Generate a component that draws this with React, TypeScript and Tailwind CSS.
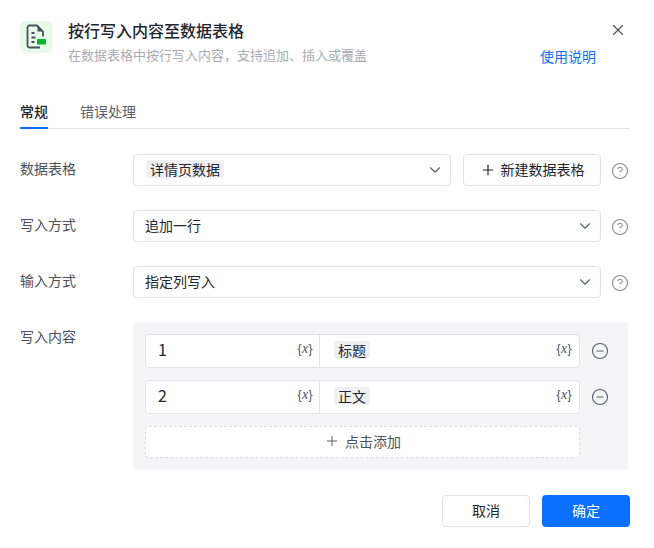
import React from 'react';
import { ChevronDown, CircleHelp, CircleMinus, Plus, X } from 'lucide-react';

const FONT = 'font-["Noto_Sans_CJK_SC","Liberation_Sans",sans-serif]';

const FieldLabel = ({ text }: { text: string }) => (
    <div className="w-[113px] shrink-0 text-[14px] leading-[28px] text-[#4b5060]">{text}</div>
);

const Help = () => (
    <div className="w-[29px] h-8 shrink-0 pr-[1px] flex items-center justify-end pt-[2px]">
        <CircleHelp size={18} strokeWidth={1.4} className="text-[#85878f]" />
    </div>
);

const SelectBox = ({ value, tag, width }: { value: string; tag?: boolean; width: string }) => (
    <div className={`${width} shrink-0 h-8 pl-3 pr-[6px] flex items-center justify-between bg-white border border-[#e2e3ea] rounded-[4px]`}>
        <span className={`text-[14px] leading-[18px] -mt-[2px] text-[#23262f] ${tag ? 'bg-[#eef0f4] rounded-[3px] px-1' : '-ml-[1px]'}`}>{value}</span>
        <ChevronDown size={18} strokeWidth={1.5} className="text-[#5c5f6b]" />
    </div>
);

const VarMark = () => (
    <span className='font-["Liberation_Sans",sans-serif] text-[12px] leading-none tracking-[0.4px] text-[#4b5060] pb-[4px]'>
        {'{'}<i className='font-["Liberation_Serif",serif] text-[14px]'>x</i>{'}'}
    </span>
);

const MappingRow = ({ index, name }: { index: string; name: string }) => (
    <div className="flex items-center">
        <div className="w-[435px] h-[34px] flex bg-white border border-[#e2e3ea] rounded-[4px]">
            <div className="w-[174px] pl-3 pr-[6px] flex items-center justify-between border-r border-[#e2e3ea]">
                <span className="text-[16px] text-[#23262f] pb-[5px]">{index}</span>
                <VarMark />
            </div>
            <div className="flex-1 pl-[14px] pr-[7px] flex items-center justify-between">
                <span className="text-[14px] leading-[18px] -mt-[2px] px-1 bg-[#eef0f4] rounded-[3px] text-[#23262f]">{name}</span>
                <VarMark />
            </div>
        </div>
        <CircleMinus size={18} strokeWidth={1.5} className="ml-[11px] text-[#5c5f6b]" />
    </div>
);

export default function App() {
    return (
        <div className={`${FONT} w-[654px] h-[548px] bg-white pl-5 pr-6 pt-[21px] overflow-hidden`}>
            {/* Header */}
            <div className="flex h-[53px]">
                <div className="w-8 h-8 rounded-[5px] bg-[#e8fbe9] flex items-center justify-center shrink-0">
                    <svg width="24" height="26" viewBox="0 0 24 26" fill="none">
                        <path d="M16 23.5H5.5a2 2 0 0 1-2-2V3.5a2 2 0 0 1 2-2H13l6 6v5" stroke="#4b5060" strokeWidth="1.8" />
                        <path d="M13.5 2v5.5H19Z" fill="#4b5060" />
                        <path d="M7.5 9h3M7.5 13.5h4M7.5 18h3" stroke="#4b5060" strokeWidth="1.8" />
                        <rect x="13" y="15" width="9" height="5.5" rx="0.5" fill="#0bb52b" />
                    </svg>
                </div>
                <div className="ml-4 flex-1 -mt-[1px]">
                    <div className="text-[16px] leading-[20px] font-medium text-[#23262f]">按行写入内容至数据表格</div>
                    <div className="mt-[5px] flex items-start justify-between">
                        <span className="text-[13px] leading-[20px] text-[#a9abb3]">在数据表格中按行写入内容，支持追加、插入或覆盖</span>
                        <span className="mt-[1px] mr-[13px] text-[14px] leading-[20px] text-[#0b6fff]">使用说明</span>
                    </div>
                </div>
                <X size={18} strokeWidth={1.5} className="mr-[3px] text-[#4b5060]" />
            </div>

            {/* Tabs */}
            <div className="mt-[27px] h-7 flex gap-8 border-b border-[#e2e3ea] w-[610px]">
                <div className="h-7 border-b-2 border-[#0b6fff] text-[14px] leading-[20px] font-medium text-[#23262f]">常规</div>
                <div className="text-[14px] leading-[20px] text-[#5c5f6b]">错误处理</div>
            </div>

            {/* Form */}
            <div className="mt-[25px] flex">
                <FieldLabel text="数据表格" />
                <SelectBox value="详情页数据" tag width="w-[318px]" />
                <div className="ml-3 w-[138px] shrink-0 h-8 pb-[1px] flex items-center justify-center gap-[5px] border border-[#e2e3ea] rounded-[4px] text-[14px] text-[#23262f]">
                    <Plus size={16} strokeWidth={1.8} />
                    新建数据表格
                </div>
                <Help />
            </div>
            <div className="mt-6 flex">
                <FieldLabel text="写入方式" />
                <SelectBox value="追加一行" width="w-[468px]" />
                <Help />
            </div>
            <div className="mt-6 flex">
                <FieldLabel text="输入方式" />
                <SelectBox value="指定列写入" width="w-[468px]" />
                <Help />
            </div>
            <div className="mt-6 flex">
                <FieldLabel text="写入内容" />
                <div className="w-[495px] h-[148px] bg-[#f5f5f8] rounded-[4px] px-3 pt-3">
                    <div className="flex flex-col gap-3">
                        <MappingRow index="1" name="标题" />
                        <MappingRow index="2" name="正文" />
                    </div>
                    <div className="mt-3 w-[435px] h-8 pb-[2px] flex items-center justify-center gap-[5px] bg-white border border-dashed border-[#dcdde4] rounded-[4px] text-[14px] text-[#4b5060]">
                        <Plus size={16} strokeWidth={1.5} className="text-[#5c5f6b]" />
                        点击添加
                    </div>
                </div>
            </div>

            {/* Footer */}
            <div className="mt-[25px] flex justify-end gap-3 w-[610px]">
                <div className="w-[88px] h-8 pb-[2px] flex items-center justify-center border border-[#e2e3ea] rounded-[4px] text-[14px] text-[#23262f]">取消</div>
                <div className="w-[88px] h-8 pb-[2px] flex items-center justify-center bg-[#0b6fff] rounded-[4px] text-[14px] text-white">确定</div>
            </div>
        </div>
    );
}
